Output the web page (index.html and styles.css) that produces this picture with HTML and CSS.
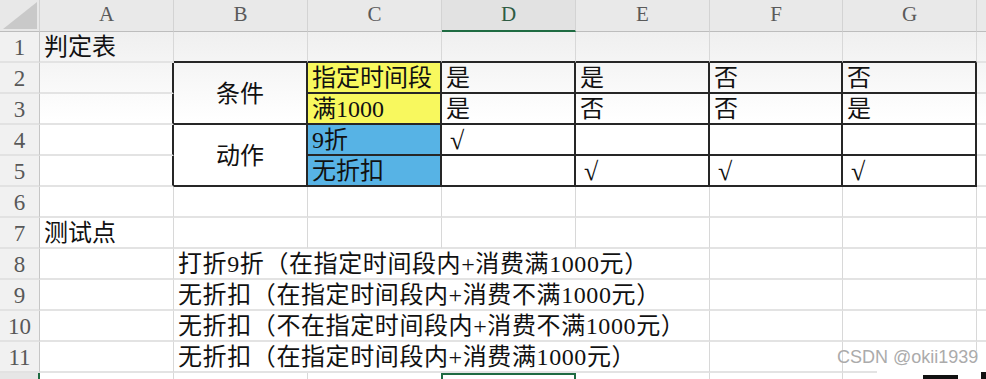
FILE: index.html
```html
<!DOCTYPE html>
<html lang="zh-CN">
<head>
<meta charset="utf-8">
<title>判定表</title>
<link rel="stylesheet" href="styles.css">
</head>
<body>
<div class="sheet">
  <div class="corner"></div>
  <div class="ch">A</div>
  <div class="ch">B</div>
  <div class="ch">C</div>
  <div class="ch on">D</div>
  <div class="ch">E</div>
  <div class="ch">F</div>
  <div class="ch">G</div>
  <div class="ch end"></div>

  <div class="rh">1</div>
  <div class="c">判定表</div>
  <div class="c bb"></div><div class="c bb"></div><div class="c bb"></div><div class="c bb"></div><div class="c bb"></div><div class="c bb"></div>
  <div class="c end"></div>

  <div class="rh">2</div>
  <div class="c br"></div>
  <div class="c bb br mid tall">条件</div>
  <div class="c bb br yel">指定时间段</div>
  <div class="c bb br">是</div>
  <div class="c bb br">是</div>
  <div class="c bb br">否</div>
  <div class="c bb br">否</div>
  <div class="c end"></div>

  <div class="rh">3</div>
  <div class="c br"></div>
  <div class="c bb br yel">满1000</div>
  <div class="c bb br">是</div>
  <div class="c bb br">否</div>
  <div class="c bb br">否</div>
  <div class="c bb br">是</div>
  <div class="c end"></div>

  <div class="rh">4</div>
  <div class="c br"></div>
  <div class="c bb br mid tall">动作</div>
  <div class="c bb br blu">9折</div>
  <div class="c bb br chk">√</div>
  <div class="c bb br"></div>
  <div class="c bb br"></div>
  <div class="c bb br"></div>
  <div class="c end"></div>

  <div class="rh">5</div>
  <div class="c br"></div>
  <div class="c bb br blu">无折扣</div>
  <div class="c bb br"></div>
  <div class="c bb br chk">√</div>
  <div class="c bb br chk">√</div>
  <div class="c bb br chk">√</div>
  <div class="c end"></div>

  <div class="rh">6</div>
  <div class="c"></div><div class="c"></div><div class="c"></div><div class="c"></div><div class="c"></div><div class="c"></div><div class="c"></div>
  <div class="c end"></div>

  <div class="rh">7</div>
  <div class="c">测试点</div>
  <div class="c"></div><div class="c"></div><div class="c"></div><div class="c"></div><div class="c"></div><div class="c"></div>
  <div class="c end"></div>

  <div class="rh">8</div>
  <div class="c"></div>
  <div class="c wide">打折9折（在指定时间段内+消费满1000元）</div>
  <div class="c"></div><div class="c"></div>
  <div class="c end"></div>

  <div class="rh">9</div>
  <div class="c"></div>
  <div class="c wide">无折扣（在指定时间段内+消费不满1000元）</div>
  <div class="c"></div><div class="c"></div>
  <div class="c end"></div>

  <div class="rh">10</div>
  <div class="c"></div>
  <div class="c wide">无折扣（不在指定时间段内+消费不满1000元）</div>
  <div class="c"></div><div class="c"></div>
  <div class="c end"></div>

  <div class="rh">11</div>
  <div class="c"></div>
  <div class="c wide">无折扣（在指定时间段内+消费满1000元）</div>
  <div class="c"></div><div class="c"></div>
  <div class="c end"></div>

  <div class="rh sel"></div>
  <div class="c last"></div>
  <div class="c last"></div>
  <div class="c last"></div>
  <div class="c last active"></div>
  <div class="c last"></div>
  <div class="c last"></div>
  <div class="c last"></div>
  <div class="c last end"></div>
</div>

<div class="wm-bg"></div>
<div class="wm">CSDN @okii1939</div>
<div class="blk blk-a"></div>
<div class="blk blk-b"></div>
</body>
</html>
```

FILE: styles.css
```css
html, body {
  margin: 0;
  padding: 0;
  background: #ffffff;
}

body {
  width: 986px;
  height: 379px;
  overflow: hidden;
  position: relative;
}

.sheet {
  display: grid;
  grid-template-columns: 40px 134px 134px 134px 134px 134px 133px 134px 1fr;
  grid-template-rows: 32px repeat(11, 31px) 1fr;
  width: 986px;
  height: 379px;
  background: linear-gradient(#efefef 30px, #f6f6f6 70px, #ffffff 120px);
  font-family: "Liberation Serif", "Noto Sans CJK SC", serif;
  color: #111111;
}

.corner {
  background: #e8e8e8;
  border-right: 1px solid #d2d2d2;
  border-bottom: 1px solid #bdbdbd;
  position: relative;
}

.corner::after {
  content: "";
  position: absolute;
  left: 3px;
  top: 2px;
  right: 2px;
  bottom: 2px;
  background: #c9c9c9;
  clip-path: polygon(100% 0, 100% 100%, 0 100%);
}

.ch {
  background: #e9e9e9;
  border-right: 1px solid #d3d3d3;
  border-bottom: 1px solid #bdbdbd;
  font-family: "Liberation Serif", serif;
  font-size: 21px;
  line-height: 28px;
  color: #5a5a5a;
  text-align: center;
}

.ch.on {
  background: #e2e2e2;
  color: #2f5c44;
  border-bottom: 2px solid #1f6b42;
}

.ch.end {
  border-right: none;
}

.rh {
  background: #f1f1f1;
  border-right: 1px solid #c6c6c6;
  border-bottom: 2px solid #e2e2e2;
  font-family: "Liberation Serif", serif;
  font-size: 23px;
  line-height: 31px;
  color: #585858;
  text-align: center;
}

.rh.sel {
  background: #e6e6e6;
  border-right: 2px solid #1f6b42;
  border-bottom: none;
}

.c {
  box-sizing: border-box;
  border-right: 1px solid #d8d8d8;
  border-bottom: 2px solid #e3e3e3;
  font-size: 24px;
  line-height: 30px;
  padding: 0 3px 0 4px;
  white-space: nowrap;
  overflow: visible;
}

.c.end {
  border-right: none;
}

.c.last {
  border-bottom: none;
}

.c.bb {
  border-bottom: 2px solid #262626;
}

.c.br {
  border-right: 2px solid #262626;
}

.c.tall {
  grid-row: span 2;
}

.c.mid {
  display: flex;
  align-items: center;
  justify-content: center;
  padding: 2px 0 0 0;
}

.c.wide {
  grid-column: span 4;
  letter-spacing: 0.6px;
}

.c.yel {
  background: #f8f85e;
}

.c.blu {
  background: #57b3e5;
}

.c.chk {
  font-family: "Liberation Serif", serif;
  font-size: 26px;
  font-weight: bold;
  padding-left: 8px;
  line-height: 31px;
}

.c.active {
  border: 2px solid #1f6b42;
  border-bottom: none;
  margin-left: -1px;
}

.wm-bg {
  position: absolute;
  left: 877px;
  top: 351px;
  width: 109px;
  height: 28px;
  background: #ffffff;
  border-top-left-radius: 4px;
}

.wm {
  position: absolute;
  left: 837px;
  top: 346px;
  font-family: "Liberation Sans", sans-serif;
  font-size: 18px;
  line-height: 22px;
  color: #ababab;
  white-space: nowrap;
}

.blk {
  position: absolute;
  background: #111111;
}

.blk-a {
  left: 923px;
  top: 375px;
  width: 35px;
  height: 4px;
}

.blk-b {
  left: 981px;
  top: 372px;
  width: 5px;
  height: 7px;
}
```
